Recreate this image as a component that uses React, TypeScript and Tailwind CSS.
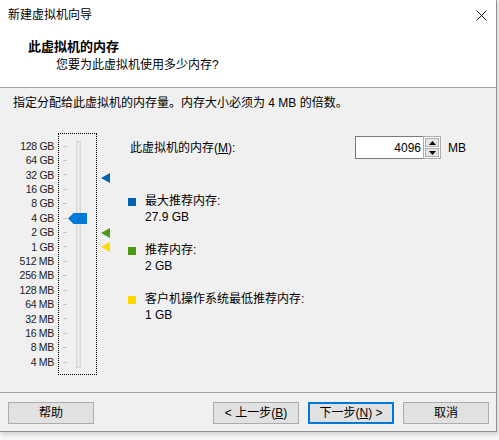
import React from "react";

const ROW = 14.42;

const scale = [
  "128 GB",
  "64 GB",
  "32 GB",
  "16 GB",
  "8 GB",
  "4 GB",
  "2 GB",
  "1 GB",
  "512 MB",
  "256 MB",
  "128 MB",
  "64 MB",
  "32 MB",
  "16 MB",
  "8 MB",
  "4 MB",
];

// index on the log scale, 0 = 128 GB
const rowOf = (gb: number) => Math.log2(128 / gb);

const markers = [
  { gb: 27.9, color: "#0063b1" },
  { gb: 2, color: "#4c9a13" },
  { gb: 1, color: "#ffd800" },
];

function Triangle({ color }: { color: string }) {
  return (
    <svg width="9" height="10" viewBox="0 0 9 10">
      <polygon points="0,5 9,0 9,10" fill={color} />
    </svg>
  );
}

function Button({
  children,
  primary,
  className = "",
}: {
  children: React.ReactNode;
  primary?: boolean;
  className?: string;
}) {
  return (
    <div
      className={
        primary
          ? `flex h-[22px] items-center justify-center border-2 border-[#0078d7] bg-[#e1e1e1] text-[12px] ${className}`
          : `flex h-[22px] items-center justify-center border border-[#adadad] bg-[#e1e1e1] text-[12px] ${className}`
      }
    >
      {children}
    </div>
  );
}

export default function App() {
  const thumbRow = rowOf(4);

  return (
    <div className="h-[440px] w-[499px] bg-[#f7f7f7] font-['Liberation_Sans','Noto_Sans_CJK_SC',sans-serif] text-black">
      <div className="flex h-[432px] w-[497px] flex-col border-r border-b border-[#8f8f8f] bg-[#f0f0f0] shadow-[1px_2px_5px_rgba(0,0,0,0.18)]">
        {/* title + header */}
        <div className="h-[88px] border-b border-[#a0a0a0] bg-white">
          <div className="flex h-[30px] items-center justify-between pl-[8px] pr-[9px] text-[12px]">
            <span>新建虚拟机向导</span>
            <svg width="11" height="11" viewBox="0 0 11 11">
              <path d="M0.5 0.5 L10.5 10.5 M10.5 0.5 L0.5 10.5" stroke="#111" strokeWidth="1" />
            </svg>
          </div>
          <div className="mt-[9px] pl-[28px] text-[13px] font-bold leading-[16px]">此虚拟机的内存</div>
          <div className="mt-[2px] pl-[56px] text-[12px] leading-[16px]">您要为此虚拟机使用多少内存?</div>
        </div>

        {/* body */}
        <div className="flex-1">
          <div className="pl-[13px] pt-[7px] text-[12px] leading-[16px]">
            指定分配给此虚拟机的内存量。内存大小必须为 4 MB 的倍数。
          </div>

          <div className="mt-[22px] flex items-start">
            {/* scale labels */}
            <div className="w-[58px] pr-[4px] pt-[5.8px] text-right text-[10.5px] tracking-[-0.3px] text-[#1a1a1a]">
              {scale.map((s) => (
                <div key={s} className="h-[14.42px] leading-[14.42px]">
                  {s}
                </div>
              ))}
            </div>

            {/* slider */}
            <div className="relative h-[242px] w-[39px] border border-dotted border-black">
              <div className="pl-[4px] pt-[4.8px]">
                {scale.map((s) => (
                  <div key={s} className="flex h-[14.42px] items-center">
                    <div className="h-px w-[4px] bg-[#c4c4c4]" />
                  </div>
                ))}
              </div>
              <div className="absolute left-[17px] top-[7px] h-[227px] w-[5px] border border-[#d6d6d6] bg-[#e7e7e7]" />
              <svg
                className="absolute left-[9px]"
                style={{ top: 12 + ROW * thumbRow - 5.5 }}
                width="19"
                height="11"
                viewBox="0 0 19 11"
              >
                <polygon points="0,5.5 5.5,0 19,0 19,11 5.5,11" fill="#0078d7" />
              </svg>
            </div>

            {/* recommendation markers */}
            <div className="relative ml-[4px] h-[242px] w-[9px]">
              {markers.map((m) => (
                <div key={m.gb} className="absolute left-0" style={{ top: 8 + ROW * rowOf(m.gb) }}>
                  <Triangle color={m.color} />
                </div>
              ))}
            </div>

            {/* right side */}
            <div className="ml-[18px] flex flex-col text-[12px]">
              <div className="mt-[3px] flex h-[23px] items-center">
                <span className="w-[227px] pl-[2px]">
                  此虚拟机的内存(<span className="underline">M</span>):
                </span>
                <div className="flex h-[23px]">
                  <div className="flex h-[23px] w-[68px] items-center justify-end border border-r-0 border-[#7a7a7a] bg-white pr-[2px]">
                    4096
                  </div>
                  <div className="flex h-[23px] w-[18px] flex-col border border-[#adadad] bg-white p-px">
                    <div className="flex flex-1 items-center justify-center border border-[#adadad] bg-[#e5e5e5]">
                      <svg width="7" height="4" viewBox="0 0 7 4">
                        <polygon points="0,4 3.5,0 7,4" fill="#000" />
                      </svg>
                    </div>
                    <div className="mt-px flex flex-1 items-center justify-center border border-[#adadad] bg-[#e5e5e5]">
                      <svg width="7" height="4" viewBox="0 0 7 4">
                        <polygon points="0,0 3.5,4 7,0" fill="#000" />
                      </svg>
                    </div>
                  </div>
                </div>
                <span className="ml-[7px]">MB</span>
              </div>

              <div className="mt-[35px] flex leading-[15.5px]">
                <div className="mt-[4px] h-[8px] w-[8px] bg-[#0063b1]" />
                <div className="ml-[9px]">
                  <div>最大推荐内存:</div>
                  <div>27.9 GB</div>
                </div>
              </div>

              <div className="mt-[18px] flex leading-[15.5px]">
                <div className="mt-[4px] h-[8px] w-[8px] bg-[#4c9a13]" />
                <div className="ml-[9px]">
                  <div>推荐内存:</div>
                  <div>2 GB</div>
                </div>
              </div>

              <div className="mt-[18px] flex leading-[15.5px]">
                <div className="mt-[4px] h-[8px] w-[8px] bg-[#ffd800]" />
                <div className="ml-[9px]">
                  <div>客户机操作系统最低推荐内存:</div>
                  <div>1 GB</div>
                </div>
              </div>
            </div>
          </div>
        </div>

        {/* footer */}
        <div className="flex border-t border-[#a0a0a0] pb-[7px] pl-[8px] pt-[9px]">
          <Button className="w-[86px]">帮助</Button>
          <Button className="ml-[119px] w-[86px]">
            &lt; 上一步(<span className="underline">B</span>)
          </Button>
          <Button primary className="ml-[9px] w-[86px]">
            下一步(<span className="underline">N</span>) &gt;
          </Button>
          <Button className="ml-[9px] w-[86px]">取消</Button>
        </div>
      </div>
    </div>
  );
}
